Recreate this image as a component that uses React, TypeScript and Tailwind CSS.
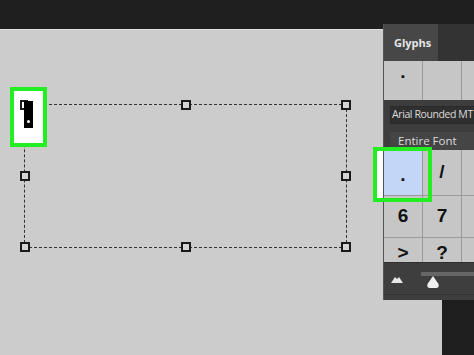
import React from 'react';

const Handle = ({ className }: { className: string }) => (
  <div className={`absolute h-[10px] w-[10px] border-2 border-[#1a1a1a] bg-[#d4d4d4] ${className}`} />
);

const Cell = ({ ch, className = '', bg = 'bg-[#c6c6c6]' }: { ch?: string; className?: string; bg?: string }) => (
  <div
    className={`flex w-[38px] shrink-0 items-center justify-center text-[19px] font-bold text-[#111] ${bg} ${className}`}
    style={{ fontFamily: '"Liberation Sans", Arial, sans-serif' }}
  >
    {ch}
  </div>
);

export default function App() {
  return (
    <div
      className="relative h-[355px] w-[474px] overflow-hidden bg-[#1f1f1f]"
      style={{ fontFamily: '"Open Sans", "Noto Sans", sans-serif' }}
    >
      {/* canvas */}
      <div className="mt-[29px] h-[326px] w-[442px] border-t border-[#e0e0e0] bg-[#cccccc] pl-[24px] pt-[74px]">
        <div className="relative h-[144px] w-[323px] border border-dashed border-[#333]">
          <Handle className="left-[-5px] top-[-5px]" />
          <Handle className="left-[156px] top-[-5px]" />
          <Handle className="right-[-5px] top-[-5px]" />
          <Handle className="left-[-5px] top-[66px]" />
          <Handle className="right-[-5px] top-[66px]" />
          <Handle className="bottom-[-5px] left-[-5px]" />
          <Handle className="bottom-[-5px] left-[156px]" />
          <Handle className="bottom-[-5px] right-[-5px]" />
        </div>
      </div>

      {/* highlighted glyph on canvas */}
      <div className="absolute left-[10px] top-[87px] h-[60px] w-[37px] border-[4px] border-[#22ee22] bg-white">
        <div className="absolute left-[6px] top-[9px] h-[10px] w-[8px] border-2 border-[#1a1a1a] bg-white" />
        <div className="absolute left-[10px] top-[10px] h-[27px] w-[9px] bg-black">
          <div className="absolute bottom-[5px] left-[3px] h-[3px] w-[3px] rounded-full bg-white" />
        </div>
      </div>

      {/* glyphs panel */}
      <div className="absolute left-[383px] top-[24px] flex h-[276px] w-[95px] flex-col border-l border-[#555] bg-[#3c3c3c]">
        <div className="flex h-[37px] bg-[#333]">
          <div className="flex w-[54px] items-center bg-[#474747] pl-[10px] pt-[1px] text-[11px] font-bold text-[#e6e6e6]">
            Glyphs
          </div>
        </div>
        <div className="flex h-[39px] gap-px bg-[#9a9a9a]">
          <Cell className="items-end pb-[14px] text-[14px]" ch="." />
          <Cell />
          <Cell />
        </div>
        <div className="flex h-[50px] flex-col gap-[8px] bg-[#3d3d3d] pl-[6px] pt-[6px]">
          <div className="flex h-[18px] items-center overflow-hidden border border-[#2a2a2a] bg-[#2f2f2f] pl-[1px] text-[10.5px] tracking-[-0.4px] whitespace-nowrap text-[#dcdcdc]">
            Arial Rounded MT
          </div>
          <div className="flex h-[18px] items-center bg-[#454545] pl-[8px] text-[11.5px] whitespace-nowrap text-[#dcdcdc]">
            Entire Font
          </div>
        </div>
        <div className="flex h-[112px] flex-col gap-px bg-[#9a9a9a]">
          <div className="flex h-[45px] gap-px">
            <Cell bg="bg-[#c3d6f8]" className="items-end pb-[6px] text-[14px]" ch="." />
            <Cell ch="/" />
            <Cell />
          </div>
          <div className="flex h-[41px] gap-px">
            <Cell ch="6" />
            <Cell ch="7" />
            <Cell />
          </div>
          <div className="flex h-[24px] gap-px">
            <Cell className="items-end leading-[18px]" ch=">" />
            <Cell className="items-end leading-[18px]" ch="?" />
            <Cell />
          </div>
        </div>
        <div className="relative flex-1 border-t border-[#2e2e2e] bg-[#3e3e3e]">
          <svg className="absolute left-[7px] top-[13px]" width="12" height="7" viewBox="0 0 12 7">
            <path d="M0 7 L4 1 L6 3 L8 1 L12 7 Z" fill="#e8e8e8" />
          </svg>
          <div className="absolute left-[37px] top-[9px] h-[4px] w-[60px] bg-[#666]" />
          <svg className="absolute left-[42px] top-[12px]" width="14" height="14" viewBox="0 0 14 14">
            <path d="M7 1 L12.5 9 Q13.5 13 10 13 L4 13 Q0.5 13 1.5 9 Z" fill="#f0f0f0" />
          </svg>
          <div className="absolute bottom-[5px] left-0 right-0 h-px bg-[#333]" />
        </div>
      </div>

      {/* highlighted glyph in panel */}
      <div className="absolute left-[373px] top-[147px] h-[55px] w-[59px] border-[4px] border-[#22ee22]">
        <div className="absolute left-0 top-0 h-full w-[6px] bg-white" />
      </div>
    </div>
  );
}
